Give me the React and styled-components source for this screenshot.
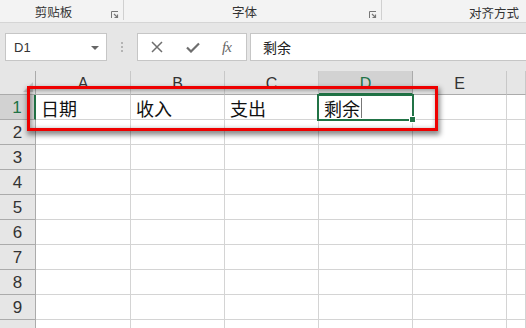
import React from "react"
import styled, { createGlobalStyle } from "styled-components"

const GlobalStyle = createGlobalStyle`
    html, body { margin:0; padding:0; background:#ffffff; }
    body { font-family:"Noto Sans CJK SC", "Liberation Sans", sans-serif; }
    * { box-sizing:border-box; }
`

const green = "#217346"

const Page = styled.div`
    position:relative;
    width:526px;
    height:328px;
    overflow:hidden;
    background:#e6e6e6;
`

// Ribbon group labels
const Ribbon = styled.div`
    display:flex;
    height:23px;
    background:#f3f3f3;
    border-bottom:1px solid #d5d5d5;
`
const RibbonGroup = styled.div`
    position:relative;
    flex:${p => p.$width ? `0 0 ${p.$width}px` : "1"};
    display:flex;
    align-items:center;
    justify-content:center;
    padding-top:3px;
    padding-left:${p => p.$shift || 0}px;
    padding-right:${p => p.$last ? 0 : 16}px;
    border-right:${p => p.$last ? "none" : "1px solid #d0d0d0"};
    margin:${p => p.$last ? "0" : "0 0 2px 0"};
    font-size:12.5px;
    color:#333;
`
const Launcher = styled.svg`
    position:absolute;
    right:4px;
    top:11px;
`

const Band = styled.div`
    height:${p => p.$h}px;
    background:#e6e6e6;
`

// Formula bar
const FormulaBar = styled.div`
    display:flex;
    align-items:stretch;
    height:28px;
    padding-left:5px;
    background:#e6e6e6;
`
const NameBox = styled.div`
    position:relative;
    width:102px;
    background:#fff;
    border:1px solid #c6c6c6;
    display:flex;
    align-items:center;
    padding-left:8px;
    font-family:"Liberation Sans", sans-serif;
    font-size:13px;
    color:#333;
    &::after{
        content:"";
        position:absolute;
        right:7px;
        top:12px;
        border-left:4px solid transparent;
        border-right:4px solid transparent;
        border-top:4px solid #666;
    }
`
const Grip = styled.div`
    width:30px;
    display:flex;
    flex-direction:column;
    align-items:center;
    justify-content:center;
    gap:2px;
    & span{
        width:2px;
        height:2px;
        background:#b4b4b4;
    }
`
const FxBox = styled.div`
    width:110px;
    background:#fff;
    border:1px solid #c6c6c6;
    display:flex;
    align-items:center;
    justify-content:space-around;
    padding:0 4px 0 2px;
`
const Fx = styled.span`
    font-family:"Liberation Serif", serif;
    font-style:italic;
    font-size:15px;
    color:#666;
    letter-spacing:-1px;
`
const FormulaInput = styled.div`
    flex:1;
    margin-left:3px;
    background:#fff;
    border:1px solid #c6c6c6;
    border-right:none;
    display:flex;
    align-items:center;
    padding-left:12px;
    font-size:14px;
    color:#222;
`

// Sheet grid
const Sheet = styled.div`
    position:relative;
    display:grid;
    grid-template-columns:36px 95px 94px 94px 94px 94px 1fr;
    grid-template-rows:24px repeat(10, 25px);
    background:#fff;
`
const Corner = styled.div`
    position:relative;
    background:#e6e6e6;
    border-right:1px solid #ababab;
    border-bottom:1px solid #ababab;
    &::after{
        content:"";
        position:absolute;
        right:2px;
        bottom:2px;
        border-left:10px solid transparent;
        border-bottom:10px solid #c4c4c4;
    }
`
const ColHead = styled.div`
    display:flex;
    align-items:center;
    justify-content:center;
    padding-top:3px;
    background:${p => p.$active ? "#d2d2d2" : "#e6e6e6"};
    border-right:1px solid ${p => p.$active ? "#ababab" : "#c8c8c8"};
    border-bottom:${p => p.$active ? `2px solid ${green}` : "1px solid #ababab"};
    font-family:"Liberation Sans", sans-serif;
    font-size:16px;
    color:${p => p.$active ? green : "#333"};
`
const RowHead = styled.div`
    display:flex;
    align-items:center;
    justify-content:center;
    padding-top:2px;
    background:${p => p.$active ? "#d2d2d2" : "#e6e6e6"};
    border-right:${p => p.$active ? `2px solid ${green}` : "1px solid #ababab"};
    border-bottom:1px solid #ababab;
    font-family:"Liberation Sans", sans-serif;
    font-size:17px;
    color:${p => p.$active ? green : "#333"};
`
const Cell = styled.div`
    display:flex;
    align-items:center;
    padding:2px 0 0 5px;
    border-right:1px solid #d4d4d4;
    border-bottom:1px solid #d4d4d4;
    font-size:18px;
    color:#111;
    white-space:nowrap;
`
const Caret = styled.span`
    display:inline-block;
    width:1px;
    height:20px;
    margin-left:1px;
    background:#777;
`

// overlays
const Selection = styled.div`
    position:absolute;
    left:317px;
    top:23px;
    width:97px;
    height:27px;
    border:2px solid ${green};
    pointer-events:none;
    &::after{
        content:"";
        position:absolute;
        right:-4px;
        bottom:-4px;
        width:5px;
        height:5px;
        background:${green};
        border:1px solid #fff;
    }
`
const Highlight = styled.div`
    position:absolute;
    left:27px;
    top:15px;
    width:411px;
    height:45px;
    border:3px solid #ee0000;
    box-shadow:1px 3px 5px 1px rgba(0,0,0,0.45), inset 1px 1px 5px rgba(0,0,0,0.4);
    pointer-events:none;
`

const LauncherIcon = () => (
    <Launcher width="8" height="8" viewBox="0 0 8 8">
        <path d="M0.5 7V0.5H7" fill="none" stroke="#777" strokeWidth="1" />
        <path d="M3 3L6.5 6.5M3.5 6.5H6.5V3.5" fill="none" stroke="#777" strokeWidth="1.2" />
    </Launcher>
)

const columns = ["A", "B", "C", "D", "E", ""]
const firstRow = ["日期", "收入", "支出", "剩余", "", ""]

function App(){
    // the 10th row only peeks in at the bottom edge, its number is not visible
    const rows = [1, 2, 3, 4, 5, 6, 7, 8, 9, 10]
    return (
        <>
            <GlobalStyle />
            <Page>
                <Ribbon>
                    <RibbonGroup $width={124}>剪贴板<LauncherIcon /></RibbonGroup>
                    <RibbonGroup $width={258}>字体<LauncherIcon /></RibbonGroup>
                    <RibbonGroup $last $shift={80}>对齐方式</RibbonGroup>
                </Ribbon>
                <Band $h={10} />
                <FormulaBar>
                    <NameBox>D1</NameBox>
                    <Grip><span /><span /><span /></Grip>
                    <FxBox>
                        <svg width="12" height="12" viewBox="0 0 12 12">
                            <path d="M1 1L11 11M11 1L1 11" stroke="#6e6e6e" strokeWidth="1.5" />
                        </svg>
                        <svg width="14" height="11" viewBox="0 0 14 11">
                            <path d="M1 5.5L5 9.5L13 1.5" fill="none" stroke="#6e6e6e" strokeWidth="2.2" />
                        </svg>
                        <Fx>fx</Fx>
                    </FxBox>
                    <FormulaInput>剩余</FormulaInput>
                </FormulaBar>
                <Band $h={10} />
                <Sheet>
                    <Corner />
                    {columns.map((c, i) => (
                        <ColHead key={"h" + i} $active={c === "D"}>{c}</ColHead>
                    ))}
                    {rows.map(r => (
                        <React.Fragment key={r}>
                            <RowHead $active={r === 1}>{r < 10 ? r : ""}</RowHead>
                            {columns.map((c, i) => (
                                <Cell key={c + i}>
                                    {r === 1 ? firstRow[i] : ""}
                                    {r === 1 && c === "D" ? <Caret /> : null}
                                </Cell>
                            ))}
                        </React.Fragment>
                    ))}
                    <Selection />
                    <Highlight />
                </Sheet>
            </Page>
        </>
    )
}

export default App
